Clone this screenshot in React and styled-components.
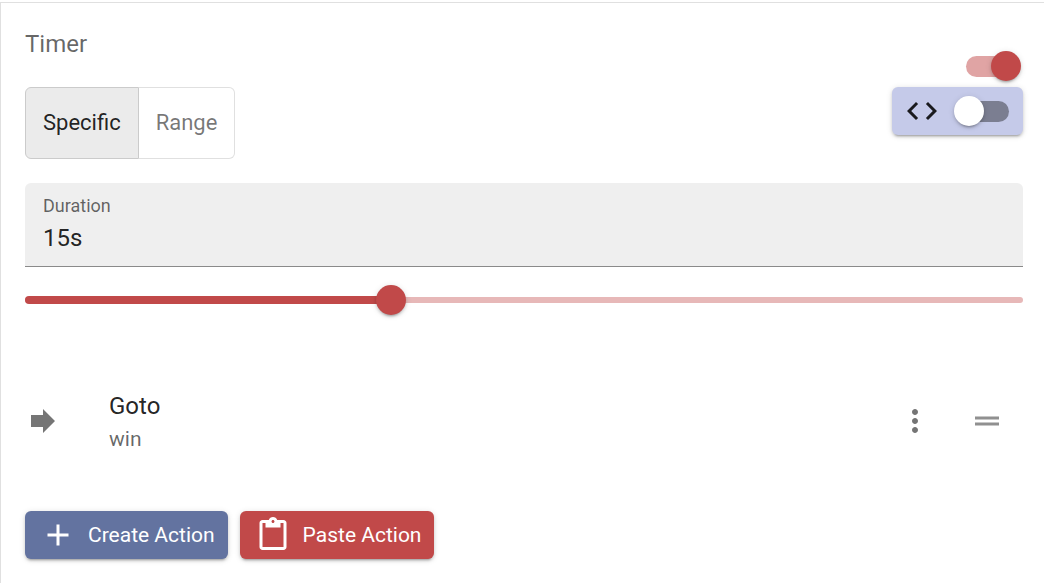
import React, { useState } from "react";
import styled, { createGlobalStyle } from "styled-components";

const red = "#c14949";
const lift = "0 4px 2px -3px rgba(0,0,0,.2), 0 2px 3px rgba(0,0,0,.14), 0 1px 6px rgba(0,0,0,.12)";

const GlobalStyle = createGlobalStyle`
  *, *::before, *::after { box-sizing: border-box; }
  body {
    margin: 0;
    background: #fff;
    color: rgba(0, 0, 0, 0.87);
    font-family: Roboto, "Liberation Sans", sans-serif;
    font-size: 24px;
    line-height: 36px;
  }
  button, input { font: inherit; color: inherit; margin: 0; }
`;

const Panel = styled.main`
  margin-top: 2px;
  min-height: calc(100vh - 2px);
  padding: 24px 21px 24px 24px;
  border-top: 1px solid #e0e0e0;
  border-left: 1px solid #e0e0e0;
`;

const Header = styled.header`
  display: flex;
  justify-content: space-between;
  align-items: flex-start;
`;

const Title = styled.h1`
  margin: 0 0 26px;
  font-size: 24px;
  font-weight: 400;
  line-height: 34px;
  color: rgba(0, 0, 0, 0.6);
`;

const ToggleGroup = styled.div`
  display: flex;
  height: 72px;
`;

const Toggle = styled.button`
  padding: 0 17px;
  border: 1px solid ${(p) => (p.$selected ? "#cbcbcb" : "#e0e0e0")};
  font-size: 22px;
  background: ${(p) => (p.$selected ? "#ebebeb" : "#fff")};
  color: ${(p) => (p.$selected ? "rgba(0,0,0,.87)" : "rgba(0,0,0,.54)")};
  &:first-child { border-radius: 6px 0 0 6px; }
  &:last-child { border-left: 0; border-radius: 0 6px 6px 0; }
`;

const Switches = styled.div`
  display: flex;
  flex-direction: column;
  align-items: flex-end;
  gap: 6px;
  padding-top: 24px;
`;

const Switch = styled.input.attrs({ type: "checkbox", role: "switch" })`
  appearance: none;
  position: relative;
  flex: none;
  width: 59px;
  height: 30px;
  cursor: pointer;
  &::before {
    content: "";
    position: absolute;
    inset: 5px 4px 4px;
    border-radius: 11px;
    background: #7b7e91;
  }
  &::after {
    content: "";
    position: absolute;
    left: 0;
    top: 0;
    width: 30px;
    height: 30px;
    border-radius: 50%;
    background: #fff;
    box-shadow: ${lift};
  }
  &:checked::before { background: #e0a4a4; }
  &:checked::after { left: auto; right: 0; background: ${red}; }
`;

const EnableRow = styled.div`
  display: flex;
  padding-right: 2px;
`;

const CodeSwitch = styled.label`
  display: flex;
  align-items: center;
  gap: 14px;
  height: 48px;
  padding: 0 10px 0 12px;
  border-radius: 6px;
  background: #c5cae9;
  box-shadow: ${lift};
`;

const Icon = styled.svg.attrs({ viewBox: "0 0 24 24", "aria-hidden": true })`
  display: block;
  flex: none;
  width: 36px;
  height: 36px;
  fill: currentColor;
`;

const Field = styled.label`
  display: block;
  height: 84px;
  margin-top: 24px;
  padding: 11px 18px 0;
  border-radius: 6px 6px 0 0;
  border-bottom: 1px solid #8a8a8a;
  background: #efefef;
`;

const FieldLabel = styled.span`
  display: block;
  font-size: 18px;
  line-height: 24px;
  color: rgba(0, 0, 0, 0.6);
`;

const FieldInput = styled.input`
  display: block;
  width: 100%;
  height: 40px;
  padding: 0;
  border: 0;
  outline: 0;
  background: transparent;
`;

const SliderBox = styled.div`
  position: relative;
  height: 30px;
  margin-top: 18px;
`;

const Rail = styled.div`
  position: absolute;
  left: 0;
  right: 0;
  top: 12px;
  height: 6px;
  border-radius: 3px;
  background: #e7b8b8;
`;

const Fill = styled.div`
  position: absolute;
  left: 0;
  top: 11px;
  height: 8px;
  border-radius: 4px;
  background: ${red};
`;

const Range = styled.input.attrs({ type: "range" })`
  appearance: none;
  position: absolute;
  left: -15px;
  top: 0;
  width: calc(100% + 30px);
  height: 30px;
  background: transparent;
  cursor: pointer;
  &::-webkit-slider-thumb {
    appearance: none;
    width: 30px;
    height: 30px;
    border-radius: 50%;
    background: ${red};
    box-shadow: ${lift};
  }
`;

const List = styled.ul`
  list-style: none;
  margin: 60px 0 44px;
  padding: 0;
`;

const ListItem = styled.li`
  display: flex;
  align-items: center;
  padding: 13px 18px 13px 0;
  color: rgba(0, 0, 0, 0.54);
`;

const ItemText = styled.div`
  flex: 1;
  margin-left: 48px;
`;

const Primary = styled.div`
  color: rgba(0, 0, 0, 0.87);
`;

const Secondary = styled.div`
  font-size: 21px;
  line-height: 30px;
  color: rgba(0, 0, 0, 0.6);
`;

const IconButton = styled.button`
  padding: 0;
  border: 0;
  background: none;
  margin-left: 36px;
  opacity: ${(p) => (p.$faint ? 0.8 : 1)};
`;

const Actions = styled.div`
  display: flex;
  gap: 12px;
`;

const ActionButton = styled.button`
  display: flex;
  align-items: center;
  gap: 12px;
  height: 48px;
  padding: 0 13px 0 15px;
  border: 0;
  border-radius: 6px;
  font-size: 21px;
  color: #fff;
  background: ${(p) => p.$color};
  box-shadow: ${lift};
`;

export default function App() {
  const [mode, setMode] = useState("Specific");
  const [position, setPosition] = useState(22);
  return (
    <>
      <GlobalStyle />
      <Panel>
        <Header>
          <div>
            <Title>Timer</Title>
            <ToggleGroup role="group" aria-label="Timer mode">
              {["Specific", "Range"].map((name) => (
                <Toggle
                  key={name}
                  type="button"
                  aria-pressed={mode === name}
                  $selected={mode === name}
                  onClick={() => setMode(name)}
                >
                  {name}
                </Toggle>
              ))}
            </ToggleGroup>
          </div>
          <Switches>
            <EnableRow>
              <Switch defaultChecked aria-label="Enabled" />
            </EnableRow>
            <CodeSwitch>
              <Icon>
                <path d="M9.4 16.6 4.8 12l4.6-4.6L8 6l-6 6 6 6 1.4-1.4zm5.2 0 4.6-4.6-4.6-4.6L16 6l6 6-6 6-1.4-1.4z" />
              </Icon>
              <Switch aria-label="Code view" />
            </CodeSwitch>
          </Switches>
        </Header>

        <Field>
          <FieldLabel>Duration</FieldLabel>
          <FieldInput type="text" defaultValue="15s" />
        </Field>
        <SliderBox>
          <Rail />
          <Fill style={{ width: `${(position / 60) * 100}%` }} />
          <Range
            min="0"
            max="60"
            value={position}
            aria-label="Duration"
            onChange={(e) => setPosition(Number(e.target.value))}
          />
        </SliderBox>

        <List>
          <ListItem>
            <Icon>
              <path d="M12 8V4l8 8-8 8v-4H4V8z" />
            </Icon>
            <ItemText>
              <Primary>Goto</Primary>
              <Secondary>win</Secondary>
            </ItemText>
            <IconButton type="button" aria-label="More">
              <Icon>
                <path d="M12 8c1.1 0 2-.9 2-2s-.9-2-2-2-2 .9-2 2 .9 2 2 2zm0 2c-1.1 0-2 .9-2 2s.9 2 2 2 2-.9 2-2-.9-2-2-2zm0 6c-1.1 0-2 .9-2 2s.9 2 2 2 2-.9 2-2-.9-2-2-2z" />
              </Icon>
            </IconButton>
            <IconButton type="button" aria-label="Reorder" $faint>
              <Icon>
                <path d="M20 9H4v2h16V9zM4 15h16v-2H4v2z" />
              </Icon>
            </IconButton>
          </ListItem>
        </List>

        <Actions>
          <ActionButton type="button" $color="#6373a0">
            <Icon>
              <path d="M19 13h-6v6h-2v-6H5v-2h6V5h2v6h6v2z" />
            </Icon>
            Create Action
          </ActionButton>
          <ActionButton type="button" $color={red}>
            <Icon>
              <path d="M19 2h-4.18C14.4.84 13.3 0 12 0c-1.3 0-2.4.84-2.82 2H5c-1.1 0-2 .9-2 2v16c0 1.1.9 2 2 2h14c1.1 0 2-.9 2-2V4c0-1.1-.9-2-2-2zm-7 0c.55 0 1 .45 1 1s-.45 1-1 1-1-.45-1-1 .45-1 1-1zm7 18H5V4h2v3h10V4h2v16z" />
            </Icon>
            Paste Action
          </ActionButton>
        </Actions>
      </Panel>
    </>
  );
}
